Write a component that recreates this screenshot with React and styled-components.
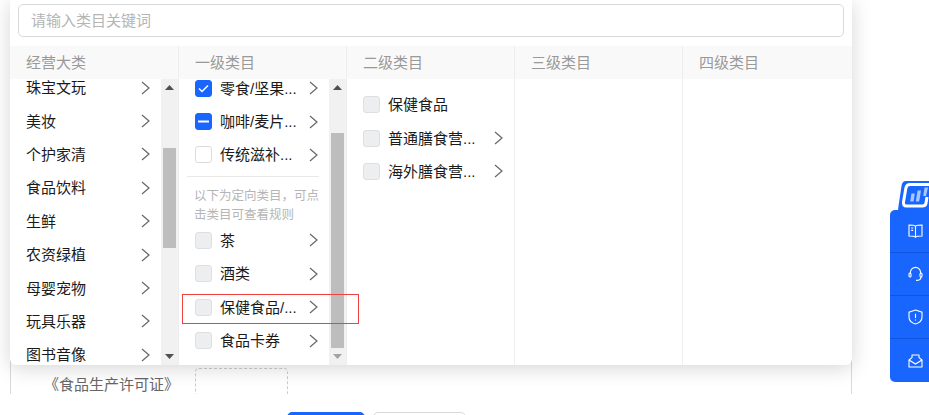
import styled, { createGlobalStyle } from 'styled-components';

const GlobalStyle = createGlobalStyle`
  html, body {
    margin: 0;
    background: #fff;
    font-family: "Liberation Sans", "Noto Sans CJK SC", sans-serif;
    font-size: 15px;
  }
`;

const Page = styled.div`
  position: relative;
  width: 929px;
  height: 415px;
  overflow: hidden;
  display: flex;
  flex-direction: column;
`;

const FormArea = styled.div`
  height: 394px;
  padding-left: 10px;
`;

const FormCard = styled.div`
  box-sizing: border-box;
  width: 842px;
  height: 394px;
  padding-top: 368px;
  border-left: 1px solid #d9d9d9;
  border-right: 1px solid #d9d9d9;
  display: flex;
  align-items: flex-start;
  overflow: hidden;
`;

const FieldLabel = styled.label`
  width: 168px;
  margin-right: 16px;
  padding-top: 5px;
  text-align: right;
  color: #666;
  white-space: nowrap;
`;

const UploadBox = styled.div`
  box-sizing: border-box;
  width: 93px;
  height: 94px;
  flex: none;
  border: 1px dashed #ccc;
  border-radius: 4px;
`;

const Footer = styled.div`
  position: relative;
  z-index: 2;
  flex: 1;
  display: flex;
  gap: 8px;
  padding: 18px 0 0 287px;
  background: #fff;
  overflow: hidden;
`;

const FooterButton = styled.button`
  box-sizing: border-box;
  width: ${p => (p.$primary ? '78px' : '93px')};
  height: 32px;
  flex: none;
  padding: 0;
  border-radius: 5px;
  border: 1px solid ${p => (p.$primary ? '#1966ff' : '#d9d9d9')};
  background: ${p => (p.$primary ? '#1966ff' : '#fff')};
`;

const Panel = styled.div`
  position: absolute;
  z-index: 1;
  left: 10px;
  top: 0;
  width: 842px;
  height: 365px;
  display: flex;
  flex-direction: column;
  background: #fff;
  border-radius: 0 0 6px 6px;
  box-shadow: 0 3px 20px rgba(0, 0, 0, 0.17);
  overflow: hidden;
`;

const SearchBar = styled.div`
  padding: 4px 8px 9px;
`;

const SearchInput = styled.input`
  box-sizing: border-box;
  display: block;
  width: 100%;
  height: 33px;
  padding: 0 12px;
  border: 1px solid #d9d9d9;
  border-radius: 5px;
  outline: none;
  font: inherit;
  &::placeholder {
    color: #b5b5b5;
  }
`;

const Columns = styled.div`
  flex: 1;
  min-height: 0;
  display: grid;
  grid-template-columns: 169px 168px 168px 168px 169px;
`;

const Column = styled.div`
  box-sizing: border-box;
  min-width: 0;
  min-height: 0;
  display: flex;
  flex-direction: column;
  border-right: ${p => (p.$last ? 'none' : '1px solid #eee')};
`;

const ColumnTitle = styled.div`
  height: 33px;
  flex: none;
  padding-left: 16px;
  line-height: 33px;
  color: #999;
  background: #f9f9f9;
`;

const ColumnBody = styled.div`
  position: relative;
  flex: 1;
  min-height: 0;
  display: flex;
`;

const List = styled.div`
  flex: 1;
  min-width: 0;
  overflow: hidden;
`;

// offset: how far the list sits from the top of the column body (negative = scrolled)
const ListInner = styled.div`
  margin-top: ${p => p.$offset}px;
`;

const Row = styled.div`
  box-sizing: border-box;
  height: 33.4px;
  display: flex;
  align-items: center;
  gap: 8px;
  padding: 0 11px 0 16px;
  color: #1a1a1a;
`;

const Check = styled.span`
  box-sizing: border-box;
  width: 17px;
  height: 17px;
  flex: none;
  display: flex;
  align-items: center;
  justify-content: center;
  border-radius: 3px;
  border: 1px solid ${p => ({ on: '#1966ff', empty: '#dcdcdc', off: '#dedfe2' }[p.$state])};
  background: ${p => ({ on: '#1966ff', empty: '#fff', off: '#eceef0' }[p.$state])};
`;

const Label = styled.span`
  white-space: nowrap;
  padding-bottom: 2px;
`;

const Arrow = styled.svg`
  width: 9px;
  height: 14px;
  flex: none;
  margin-left: auto;
`;

const Divider = styled.div`
  height: 1px;
  margin: 4px 10px 10px 8px;
  background: #e8e8e8;
`;

const Note = styled.p`
  margin: 0 6px -1px 15px;
  font-size: 12.5px;
  line-height: 19px;
  color: #b5b5b5;
`;

const Scrollbar = styled.div`
  width: 17px;
  flex: none;
  display: flex;
  flex-direction: column;
  background: #f1f1f1;
`;

const ScrollButton = styled.div`
  height: 17px;
  flex: none;
  display: flex;
  align-items: center;
  justify-content: center;
`;

const ScrollTrack = styled.div`
  flex: 1;
  min-height: 0;
  padding-top: ${p => p.$before}px;
`;

const ScrollThumb = styled.div`
  height: ${p => p.$size}px;
  margin: 0 2px;
  background: #bdbdbd;
`;

const Highlight = styled.div`
  position: absolute;
  left: 3px;
  top: 215px;
  width: 177px;
  height: 30px;
  box-sizing: border-box;
  border: 1px solid #f0413c;
  z-index: 1;
`;

const SideDock = styled.div`
  position: absolute;
  right: 0;
  top: 210px;
  width: 39px;
  background: #1966ff;
  border-radius: 5px 0 0 5px;
`;

const DockLogo = styled.svg`
  position: absolute;
  left: 8px;
  top: -30px;
  width: 31px;
  height: 30px;
`;

const DockItem = styled.div`
  box-sizing: border-box;
  height: 43px;
  display: flex;
  align-items: center;
  padding-left: 18px;
  border-bottom: ${p => (p.$last ? 'none' : '1px solid #0f55e0')};
`;

const DockIcon = styled.svg`
  width: 15px;
  height: 16px;
  fill: none;
  stroke: #fff;
  stroke-width: 1.1;
`;

const ChevronIcon = () => (
  <Arrow viewBox="0 0 9 14">
    <polyline points="1,1 8,7 1,13" fill="none" stroke="#666" strokeWidth="1.2" />
  </Arrow>
);

const CheckMark = ({ state, mark }) => (
  <Check $state={state}>
    {mark === 'tick' && (
      <svg width="11" height="9" viewBox="0 0 11 9">
        <polyline points="1,4.5 4,7.5 10,1.5" fill="none" stroke="#fff" strokeWidth="1.5" />
      </svg>
    )}
    {mark === 'dash' && (
      <svg width="11" height="3" viewBox="0 0 11 3">
        <rect width="11" height="2" y="0.5" fill="#fff" />
      </svg>
    )}
  </Check>
);

const TreeRow = ({ label, state, mark, more = true }) => (
  <Row>
    {state && <CheckMark state={state} mark={mark} />}
    <Label>{label}</Label>
    {more && <ChevronIcon />}
  </Row>
);

const Bar = ({ before, size, disabled }) => (
  <Scrollbar>
    <ScrollButton>
      <svg width="9" height="5" viewBox="0 0 9 5"><polygon points="4.5,0 9,5 0,5" fill="#505050" /></svg>
    </ScrollButton>
    <ScrollTrack $before={before}>
      <ScrollThumb $size={size} />
    </ScrollTrack>
    <ScrollButton>
      <svg width="9" height="5" viewBox="0 0 9 5"><polygon points="0,0 9,0 4.5,5" fill={disabled ? '#a3a3a3' : '#505050'} /></svg>
    </ScrollButton>
  </Scrollbar>
);

const majors = ['珠宝文玩', '美妆', '个护家清', '食品饮料', '生鲜', '农资绿植', '母婴宠物', '玩具乐器', '图书音像'];
const openLevelOne = [
  { label: '零食/坚果...', state: 'on', mark: 'tick' },
  { label: '咖啡/麦片...', state: 'on', mark: 'dash' },
  { label: '传统滋补...', state: 'empty' },
];
const restrictedLevelOne = ['茶', '酒类', '保健食品/...', '食品卡券'];
const levelTwo = [
  { label: '保健食品', more: false },
  { label: '普通膳食营...', more: true },
  { label: '海外膳食营...', more: true },
];

export default function App() {
  return (
    <Page>
      <GlobalStyle />
      <FormArea>
        <FormCard>
          <FieldLabel>《食品生产许可证》</FieldLabel>
          <UploadBox />
        </FormCard>
      </FormArea>
      <Footer>
        <FooterButton $primary />
        <FooterButton />
      </Footer>

      <Panel>
        <SearchBar>
          <SearchInput placeholder="请输入类目关键词" />
        </SearchBar>
        <Columns>
          <Column>
            <ColumnTitle>经营大类</ColumnTitle>
            <ColumnBody>
              <List>
                <ListInner $offset={-8}>
                  {majors.map(name => <TreeRow key={name} label={name} />)}
                </ListInner>
              </List>
              <Bar before={52} size={100} />
            </ColumnBody>
          </Column>
          <Column>
            <ColumnTitle>一级类目</ColumnTitle>
            <ColumnBody>
              <List>
                <ListInner $offset={-7.5}>
                  {openLevelOne.map(item => <TreeRow key={item.label} {...item} />)}
                  <Divider />
                  <Note>以下为定向类目，可点击类目可查看规则</Note>
                  {restrictedLevelOne.map(name => <TreeRow key={name} label={name} state="off" />)}
                </ListInner>
              </List>
              <Highlight />
              <Bar before={37} size={215} disabled />
            </ColumnBody>
          </Column>
          <Column>
            <ColumnTitle>二级类目</ColumnTitle>
            <ColumnBody>
              <List>
                <ListInner $offset={9}>
                  {levelTwo.map(item => <TreeRow key={item.label} {...item} state="off" />)}
                </ListInner>
              </List>
            </ColumnBody>
          </Column>
          <Column>
            <ColumnTitle>三级类目</ColumnTitle>
          </Column>
          <Column $last>
            <ColumnTitle>四级类目</ColumnTitle>
          </Column>
        </Columns>
      </Panel>

      <SideDock>
        <DockLogo viewBox="0 0 31 30">
          <path d="M8 1 H31 V30 H0 L0.5 26 L3.5 6 Q4.2 1 8 1 Z" fill="#1966ff" />
          <path d="M31 4.5 H12 Q8.5 4.5 7.9 8 L5.5 22 Q5 26 8.4 26 H24.5 Q27.6 26 28 23 L29 17" fill="none" stroke="#fff" strokeWidth="3" />
          <path d="M13.4 13.5 H16.8 L15.6 21.5 H12.2 Z" fill="#a9c6ff" />
          <path d="M19.6 10.5 H23 L21.2 21.5 H17.8 Z" fill="#a9c6ff" />
          <path d="M26.6 7.5 H30 L28 16 H25.2 Z" fill="#a9c6ff" />
        </DockLogo>
        <DockItem>
          <DockIcon viewBox="0 0 15 16">
            <path d="M7.5 3.2 C6.5 2.4 5 2 1 2 V13 C5 13 6.5 13.4 7.5 14.2 C8.5 13.4 10 13 14 13 V2 C10 2 8.5 2.4 7.5 3.2 Z M7.5 3.2 V14.2" />
            <path d="M3.2 5 H5.2 M3.2 7.4 H5.2" />
          </DockIcon>
        </DockItem>
        <DockItem>
          <DockIcon viewBox="0 0 15 16">
            <path d="M2.4 7.5 V6.5 A5.1 5.1 0 0 1 12.6 6.5 V7.5" />
            <rect x="1" y="7" width="2" height="4" rx="1" />
            <rect x="12" y="7" width="2" height="4" rx="1" />
            <path d="M13 11 C13 13.4 11.5 14.4 8 14.4" />
          </DockIcon>
        </DockItem>
        <DockItem>
          <DockIcon viewBox="0 0 15 16">
            <path d="M7.5 1 L14 3.2 V8 C14 11.5 11 14 7.5 15 C4 14 1 11.5 1 8 V3.2 Z" />
            <path d="M7.5 4.8 V9 M7.5 10.4 V11.6" />
          </DockIcon>
        </DockItem>
        <DockItem $last>
          <DockIcon viewBox="0 0 15 16">
            <path d="M1 7 L4 4.6 V2 H11 V4.6 L14 7 V14 H1 Z" strokeLinejoin="round" />
            <path d="M1 7 L7.5 11 L14 7" />
          </DockIcon>
        </DockItem>
      </SideDock>
    </Page>
  );
}
